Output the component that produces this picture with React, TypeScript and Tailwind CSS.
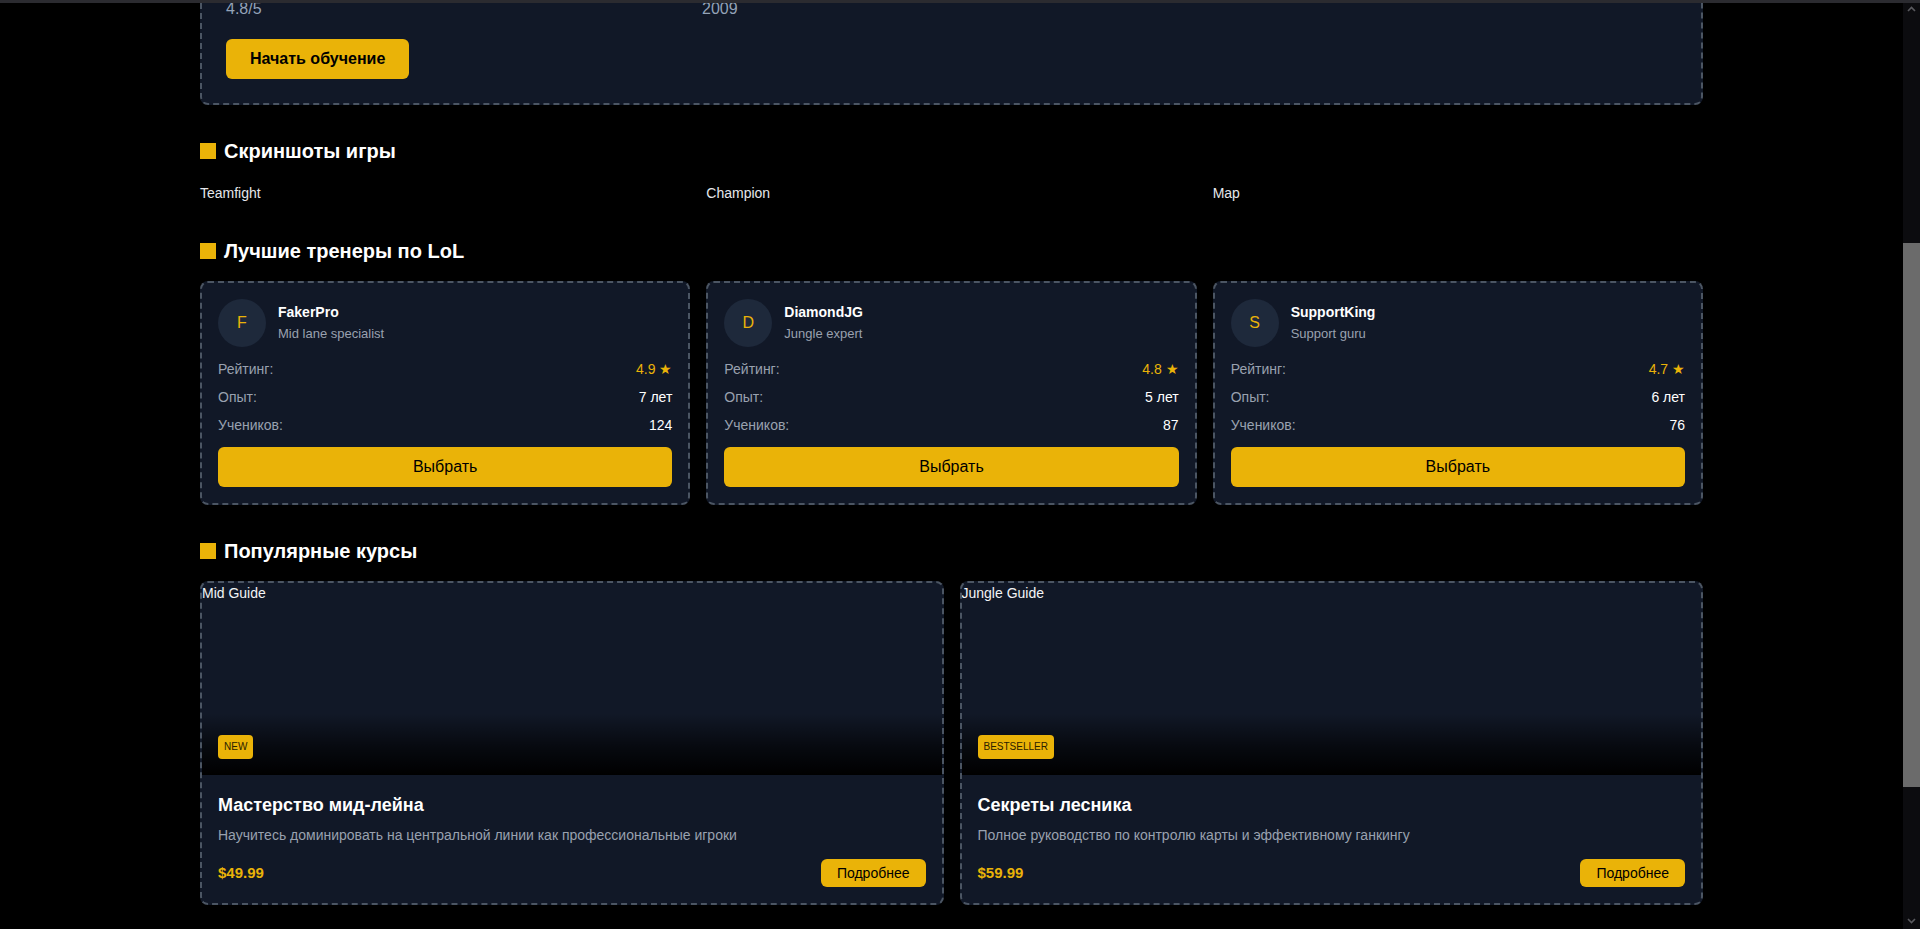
import React, { useLayoutEffect, useRef } from "react";

const trainers = [
  { letter: "F", name: "FakerPro", role: "Mid lane specialist", rating: "4.9", exp: "7 лет", students: "124" },
  { letter: "D", name: "DiamondJG", role: "Jungle expert", rating: "4.8", exp: "5 лет", students: "87" },
  { letter: "S", name: "SupportKing", role: "Support guru", rating: "4.7", exp: "6 лет", students: "76" },
];

const courses = [
  {
    alt: "Mid Guide",
    badge: "NEW",
    title: "Мастерство мид-лейна",
    desc: "Научитесь доминировать на центральной линии как профессиональные игроки",
    price: "$49.99",
  },
  {
    alt: "Jungle Guide",
    badge: "BESTSELLER",
    title: "Секреты лесника",
    desc: "Полное руководство по контролю карты и эффективному ганкингу",
    price: "$59.99",
  },
];

function SectionTitle({ children }: { children: React.ReactNode }) {
  return (
    <h2 className="flex items-center gap-2 text-xl leading-7 font-bold text-white mb-4">
      <span className="inline-block w-4 h-4 bg-[#eab308]" />
      {children}
    </h2>
  );
}

function FakeScrollbar() {
  return (
    <div className="fixed top-0 right-0 bottom-0 w-[17px] bg-[#0c0c0f] z-40 flex flex-col">
      <div className="h-[17px] flex items-center justify-center">
        <svg width="9" height="6" viewBox="0 0 9 6">
          <path d="M1 5 L4.5 1.5 L8 5" stroke="#5a5a5f" strokeWidth="1.6" fill="none" />
        </svg>
      </div>
      <div className="flex-1 relative">
        <div className="absolute left-0 right-0 top-[226px] h-[544px] bg-[#6b6b6b]" />
      </div>
      <div className="h-[17px] flex items-center justify-center">
        <svg width="9" height="6" viewBox="0 0 9 6">
          <path d="M1 1 L4.5 4.5 L8 1" stroke="#5a5a5f" strokeWidth="1.6" fill="none" />
        </svg>
      </div>
    </div>
  );
}

export default function App() {
  const anchor = useRef<HTMLButtonElement>(null);

  useLayoutEffect(() => {
    const go = () => {
      const el = anchor.current;
      if (!el) return;
      const y = el.getBoundingClientRect().top + window.scrollY - 39;
      window.scrollTo(0, y);
    };
    go();
    const id = requestAnimationFrame(go);
    const t = setTimeout(go, 50);
    return () => {
      cancelAnimationFrame(id);
      clearTimeout(t);
    };
  }, []);

  return (
    <div className="min-h-screen bg-black text-white font-['Liberation_Sans',Arial,sans-serif] pr-[17px]">
      <div className="fixed top-0 inset-x-0 h-[3px] bg-[#2b2b30] z-50" />
      <FakeScrollbar />
      <header className="h-16 flex items-center max-w-[1503px] mx-auto">
        <span className="text-lg font-bold text-[#eab308]">LoL Coaching</span>
      </header>
      <main className="max-w-[1503px] mx-auto pt-8">
        {/* Hero */}
        <section className="bg-[#111827] border-2 border-dashed border-[#4b5563] rounded-lg p-6">
          <div className="flex gap-2 mb-6">
            <span className="px-3 py-1 rounded bg-[#1e293b] text-sm text-gray-300">MOBA</span>
            <span className="px-3 py-1 rounded bg-[#1e293b] text-sm text-gray-300">Riot Games</span>
          </div>
          <h1 className="text-4xl font-bold text-white mb-4">League of Legends</h1>
          <p className="text-base leading-6 text-gray-400 mb-6 max-w-[900px]">
            Командная стратегическая игра, в которой две команды по пять чемпионов сражаются за
            уничтожение вражеского Нексуса. Изучите механики, роли и тактики вместе с лучшими
            тренерами и поднимите свой рейтинг.
          </p>
          <div className="grid grid-cols-[476px_476px]">
            <span className="text-sm leading-5 text-gray-500">Рейтинг</span>
            <span className="text-sm leading-5 text-gray-500">Год выпуска</span>
            <span className="text-base leading-6 text-[#94a3b8]">4.8/5</span>
            <span className="text-base leading-6 text-[#94a3b8]">2009</span>
          </div>
          <button
            ref={anchor}
            className="mt-[18px] px-6 py-2 rounded-md bg-[#eab308] text-black font-bold text-base leading-6"
          >
            Начать обучение
          </button>
        </section>

        {/* Screenshots */}
        <section className="mt-8">
          <SectionTitle>Скриншоты игры</SectionTitle>
          <div className="grid grid-cols-3 gap-4 text-sm leading-6 text-gray-200">
            <span>Teamfight</span>
            <span>Champion</span>
            <span>Map</span>
          </div>
        </section>

        {/* Trainers */}
        <section className="mt-8">
          <SectionTitle>Лучшие тренеры по LoL</SectionTitle>
          <div className="grid grid-cols-3 gap-4">
            {trainers.map((t) => (
              <div
                key={t.name}
                className="bg-[#111827] border-2 border-dashed border-[#4b5563] rounded-lg p-4"
              >
                <div className="flex items-center gap-3 mb-3">
                  <div className="w-12 h-12 rounded-full bg-[#1e293b] flex items-center justify-center text-[#eab308] text-base">
                    {t.letter}
                  </div>
                  <div className="flex flex-col">
                    <span className="text-sm leading-5 font-bold text-white">{t.name}</span>
                    <span className="text-[13px] leading-5 text-gray-400 mt-0.5">{t.role}</span>
                  </div>
                </div>
                <div className="flex flex-col gap-2 text-sm leading-5">
                  <div className="flex justify-between">
                    <span className="text-gray-400">Рейтинг:</span>
                    <span className="text-[#eab308]">{t.rating} ★</span>
                  </div>
                  <div className="flex justify-between">
                    <span className="text-gray-400">Опыт:</span>
                    <span className="text-white">{t.exp}</span>
                  </div>
                  <div className="flex justify-between">
                    <span className="text-gray-400">Учеников:</span>
                    <span className="text-white">{t.students}</span>
                  </div>
                </div>
                <button className="mt-3 w-full h-10 rounded-md bg-[#eab308] text-black text-base">
                  Выбрать
                </button>
              </div>
            ))}
          </div>
        </section>

        {/* Courses */}
        <section className="mt-8">
          <SectionTitle>Популярные курсы</SectionTitle>
          <div className="grid grid-cols-2 gap-4">
            {courses.map((c) => (
              <div
                key={c.title}
                className="bg-[#111827] border-2 border-dashed border-[#4b5563] rounded-lg overflow-hidden"
              >
                <div className="relative h-48">
                  <span className="absolute top-0 left-0 text-sm leading-5 text-gray-100">{c.alt}</span>
                  <div className="absolute inset-0 bg-[linear-gradient(to_top,#000_0%,rgba(0,0,0,0.6)_15%,transparent_32%)]" />
                  <span className="absolute left-4 bottom-4 px-1.5 py-1 rounded bg-[#eab308] text-[10px] leading-4 text-[#2a2100]">
                    {c.badge}
                  </span>
                </div>
                <div className="p-4">
                  <h3 className="text-lg leading-7 font-bold text-white">{c.title}</h3>
                  <p className="mt-1.5 text-sm leading-5 text-gray-400">{c.desc}</p>
                  <div className="mt-[14px] flex items-center justify-between">
                    <span className="text-[15px] font-bold text-[#eab308]">{c.price}</span>
                    <button className="px-4 py-1 rounded-md bg-[#eab308] text-black text-sm leading-5">
                      Подробнее
                    </button>
                  </div>
                </div>
              </div>
            ))}
          </div>
        </section>
      </main>
      <footer className="mt-16 border-t border-gray-900 py-[76px] text-center text-sm text-gray-500">
        © 2024 LoL Coaching. Все права защищены.
      </footer>
    </div>
  );
}
